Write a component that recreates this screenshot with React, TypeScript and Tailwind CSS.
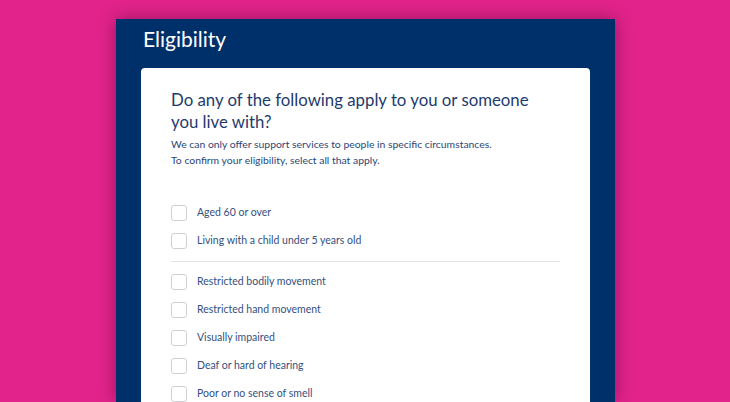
const groupOne = ['Aged 60 or over', 'Living with a child under 5 years old']
const groupTwo = [
  'Restricted bodily movement',
  'Restricted hand movement',
  'Visually impaired',
  'Deaf or hard of hearing',
  'Poor or no sense of smell',
]

function Option({ label }: { label: string }) {
  return (
    <label className="flex h-[28px] items-center gap-[10px]">
      <span className="h-[16px] w-[16px] shrink-0 rounded-[3px] border border-[#cfcfd4] bg-white" />
      <span className="text-[10.5px] text-[#34507f]">{label}</span>
    </label>
  )
}

export default function App() {
  return (
    <div
      className="flex h-[402px] w-[730px] overflow-hidden bg-[#e2238b] pl-[116px] pt-[19px]"
      style={{ fontFamily: 'Lato, "Open Sans", sans-serif' }}
    >
      <div className="flex w-[499px] flex-col bg-[#00306a] px-[25px] shadow-[0_0_16px_rgba(60,0,40,0.45)]">
        <h1 className="pl-[2px] pt-[6px] text-[21px] leading-[28px] text-white">Eligibility</h1>

        <div className="mt-[15px] flex-1 rounded-[4px] bg-white px-[30px] pt-[21px]">
          <h2 className="max-w-[360px] text-[16.8px] leading-[22px] text-[#1e3a6d]">
            Do any of the following apply to you or someone you live with?
          </h2>
          <p className="mt-[3px] text-[10.4px] leading-[16px] text-[#2c4677]">
            We can only offer support services to people in specific circumstances.
            <br />
            To confirm your eligibility, select all that apply.
          </p>

          <div className="mt-[31px] flex flex-col">
            {groupOne.map((item) => (
              <Option key={item} label={item} />
            ))}
          </div>
          <div className="my-[6px] h-px bg-[#e2e3e8]" />
          <div className="flex flex-col">
            {groupTwo.map((item) => (
              <Option key={item} label={item} />
            ))}
          </div>
        </div>
      </div>
    </div>
  )
}
